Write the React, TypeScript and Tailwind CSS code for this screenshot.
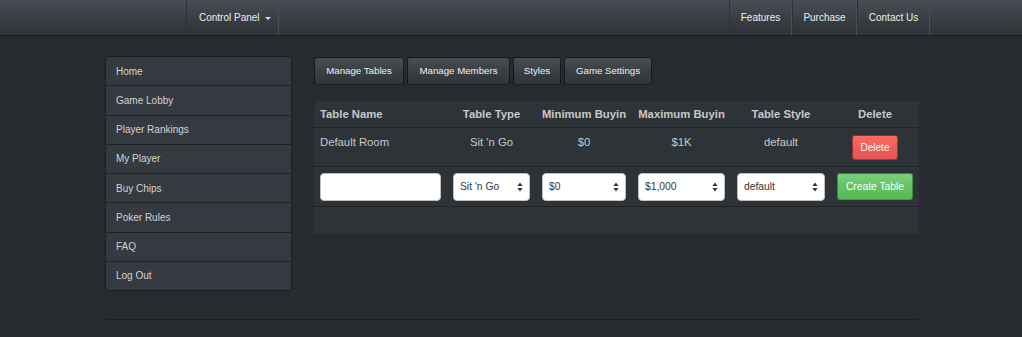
import React from 'react';

const sideLinks = ['Home', 'Game Lobby', 'Player Rankings', 'My Player', 'Buy Chips', 'Poker Rules', 'FAQ', 'Log Out'];
const tabs = ['Manage Tables', 'Manage Members', 'Styles', 'Game Settings'];
const cols = 'grid grid-cols-[133px_89px_96px_99px_100px_88px]';

function Arrows() {
  return (
    <svg width="6" height="10" viewBox="0 0 6 10" className="absolute right-[6px] top-1/2 -translate-y-1/2">
      <path d="M3 0.5 L5.6 4 L0.4 4 Z" fill="#333" />
      <path d="M3 9.5 L5.6 6 L0.4 6 Z" fill="#333" />
    </svg>
  );
}

function FakeSelect({ value }: { value: string }) {
  return (
    <div className="relative h-[28px] w-full bg-white rounded-[4px] border border-[#bfbfbf] flex items-center pl-[6px] text-[10.3px] text-[#333]">
      {value}
      <Arrows />
    </div>
  );
}

export default function App() {
  return (
    <div className="min-h-[337px] bg-[#272b30] text-[#c8c8c8] font-['Liberation_Sans',Arial,sans-serif]">
      {/* Navbar */}
      <div className="h-[36px] bg-gradient-to-b from-[#484e55] via-[#3a3f44] to-[#2f3337] border-b border-[#1c1e22] flex justify-between pl-[186px] pr-[92px] text-[10px] text-[#eee]">
        <div className="flex">
          <div className="flex items-center gap-[5px] w-[93px] pl-[12px] border-l border-[#2f3337] border-r border-r-[#4a4f56]">
            Control Panel
            <span className="border-x-[3px] border-x-transparent border-t-[3px] border-t-[#ddd] mt-[1px]" />
          </div>
        </div>
        <div className="flex">
          {[
            ['Features', 'w-[63px]'],
            ['Purchase', 'w-[65px]'],
            ['Contact Us', 'w-[73px]'],
          ].map(([n, w]) => (
            <div key={n} className={`flex items-center justify-center ${w} border-l border-[#2f3337] border-r border-r-[#4a4f56]`}>
              {n}
            </div>
          ))}
        </div>
      </div>

      <div className="w-[814px] ml-[105px] pt-[20px]">
        <div className="flex gap-[22px]">
          {/* Sidebar */}
          <div className="w-[187px] h-[235px] rounded-[3px] border border-[#1c1e22] bg-[#353a40] overflow-hidden flex flex-col">
            {sideLinks.map((l, i) => (
              <div
                key={l}
                className={`flex-1 flex items-center pl-[10px] text-[10px] text-[#d4d4d4] ${i > 0 ? 'border-t border-[#1f2226]' : ''}`}
              >
                {l}
              </div>
            ))}
          </div>

          {/* Main */}
          <div className="w-[605px]">
            <div className="flex gap-[3px] mt-[1px]">
              {[
                ['Manage Tables', 'w-[90px]'],
                ['Manage Members', 'w-[103px]'],
                ['Styles', 'w-[48px]'],
                ['Game Settings', 'w-[88px]'],
              ].map(([t, w]) => (
                <div
                  key={t}
                  className={`h-[28px] ${w} flex items-center justify-center rounded-[3px] border border-black/60 bg-gradient-to-b from-[#484e55] via-[#3a3f44] to-[#313539] text-[9.7px] text-[#eee] whitespace-nowrap`}
                >
                  {t}
                </div>
              ))}
            </div>

            <div className="mt-[16px] bg-[#2e3338] text-[11.3px]">
              <div className={`${cols} h-[27px] items-center font-bold border-b border-[#1f2226]`}>
                <div className="pl-[6px]">Table Name</div>
                <div className="text-center">Table Type</div>
                <div className="text-center">Minimum Buyin</div>
                <div className="text-center">Maximum Buyin</div>
                <div className="text-center">Table Style</div>
                <div className="text-center">Delete</div>
              </div>
              <div className={`${cols} h-[39px] pt-[6px] leading-[16px] border-b border-[#1f2226]`}>
                <div className="pl-[6px]">Default Room</div>
                <div className="text-center">Sit 'n Go</div>
                <div className="text-center">$0</div>
                <div className="text-center">$1K</div>
                <div className="text-center">default</div>
                <div className="flex justify-center">
                  <div className="h-[25px] w-[46px] mt-[1px] rounded-[3px] border border-black/40 bg-gradient-to-b from-[#ff6a66] via-[#ee5f5b] to-[#e45450] text-white text-[10px] flex items-center justify-center">
                    Delete
                  </div>
                </div>
              </div>
              <div className={`${cols} h-[40px] items-center border-b border-[#1f2226]`}>
                <div className="px-[6px]">
                  <div className="h-[28px] bg-white rounded-[4px] border border-[#bfbfbf]" />
                </div>
                <div className="px-[6px]"><FakeSelect value="Sit 'n Go" /></div>
                <div className="px-[6px]"><FakeSelect value="$0" /></div>
                <div className="px-[6px]"><FakeSelect value="$1,000" /></div>
                <div className="px-[6px]"><FakeSelect value="default" /></div>
                <div className="px-[6px]">
                  <div className="h-[27px] rounded-[3px] border border-black/30 bg-gradient-to-b from-[#7ad07a] via-[#62c462] to-[#56b856] text-white text-[10.3px] flex items-center justify-center whitespace-nowrap">
                    Create Table
                  </div>
                </div>
              </div>
              <div className="h-[27px]" />
            </div>
          </div>
        </div>

        <div className="mt-[28px] border-t border-[#1c1e22]" />
      </div>
    </div>
  );
}
